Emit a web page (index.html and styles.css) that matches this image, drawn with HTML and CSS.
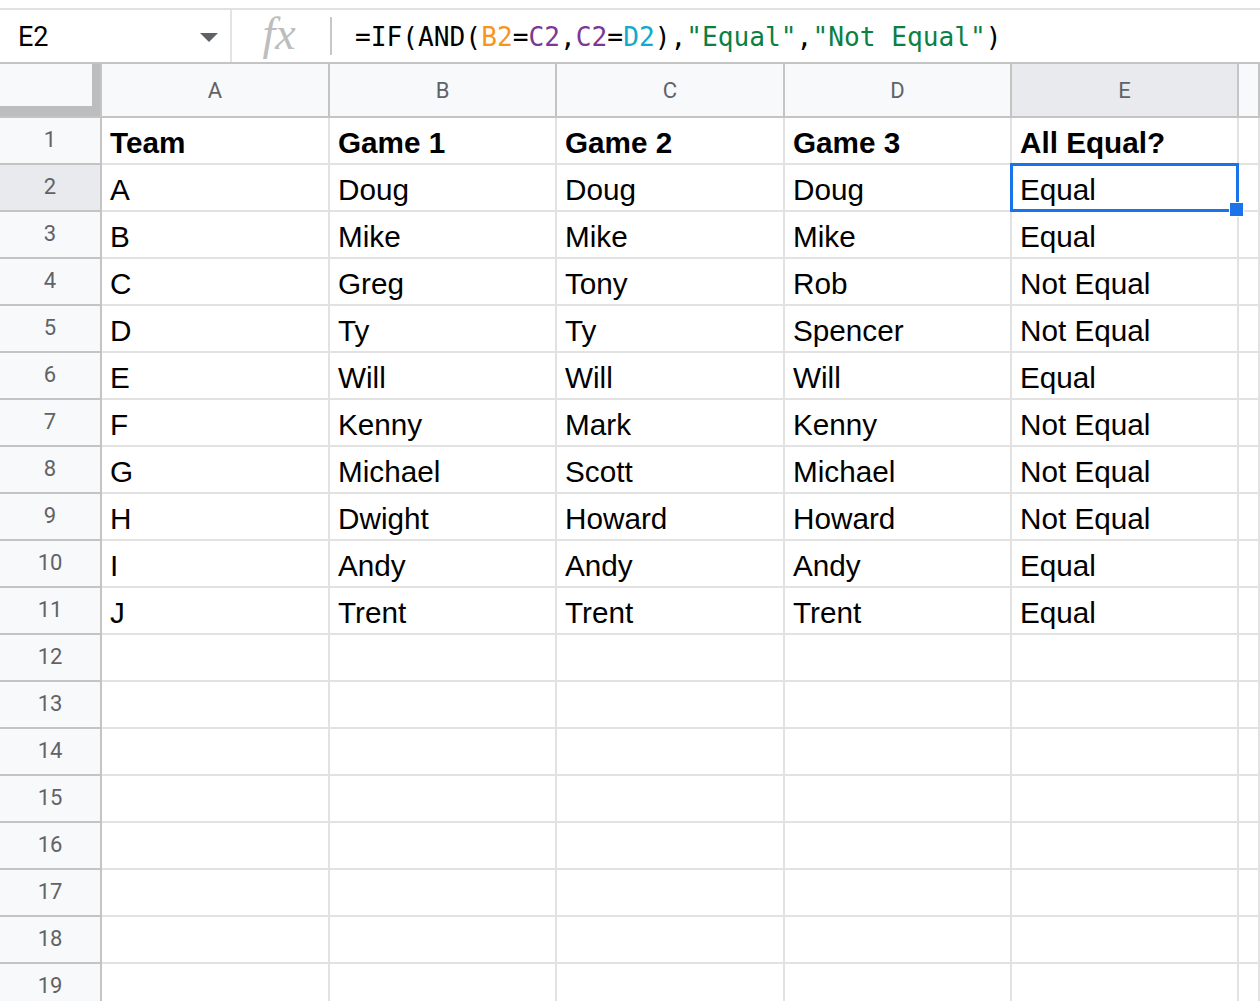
FILE: index.html
```html
<!DOCTYPE html>
<html lang="en">
<head>
  <meta charset="UTF-8" />
  <title>All Equal? - Sheet</title>
  <link rel="stylesheet" href="styles.css">
</head>
<body>

<div id="formula-bar">
  <div class="name-box">
    <span class="name-ref">E2</span>
    <span class="name-caret"></span>
  </div>
  <div class="fx-box"><span class="fx">fx</span></div>
  <div class="formula"><span>=IF(AND(</span><span class="ref-b">B2</span><span>=</span><span class="ref-c">C2</span><span>,</span><span class="ref-c">C2</span><span>=</span><span class="ref-d">D2</span><span>),</span><span class="str">"Equal"</span><span>,</span><span class="str">"Not Equal"</span><span>)</span></div>
</div>

<div id="sheet"></div>

<script>
  const sheet = document.getElementById('sheet');
  const columns = ['A', 'B', 'C', 'D', 'E'];
  const rows = [
    ['Team', 'Game 1', 'Game 2', 'Game 3', 'All Equal?'],
    ['A', 'Doug', 'Doug', 'Doug', 'Equal'],
    ['B', 'Mike', 'Mike', 'Mike', 'Equal'],
    ['C', 'Greg', 'Tony', 'Rob', 'Not Equal'],
    ['D', 'Ty', 'Ty', 'Spencer', 'Not Equal'],
    ['E', 'Will', 'Will', 'Will', 'Equal'],
    ['F', 'Kenny', 'Mark', 'Kenny', 'Not Equal'],
    ['G', 'Michael', 'Scott', 'Michael', 'Not Equal'],
    ['H', 'Dwight', 'Howard', 'Howard', 'Not Equal'],
    ['I', 'Andy', 'Andy', 'Andy', 'Equal'],
    ['J', 'Trent', 'Trent', 'Trent', 'Equal']
  ];
  const totalRows = 19;

  function addCell(cls, text) {
    const cell = document.createElement('div');
    cell.className = cls;
    if (text) cell.textContent = text;
    sheet.appendChild(cell);
    return cell;
  }

  // column headers
  addCell('corner');
  columns.forEach(c => addCell(c === 'E' ? 'col-head active' : 'col-head', c));
  addCell('col-head');

  for (let r = 1; r <= totalRows; r++) {
    addCell(r === 2 ? 'row-head active' : 'row-head', String(r));
    const data = rows[r - 1] || [];
    for (let c = 0; c < 5; c++) {
      const cell = addCell(r === 1 ? 'cell bold' : 'cell', data[c] || '');
      if (r === 2 && c === 4) {
        cell.classList.add('selected');
        const handle = document.createElement('span');
        handle.className = 'fill-handle';
        cell.appendChild(handle);
      }
    }
    addCell('cell');
  }
</script>

</body>
</html>
```

FILE: styles.css
```css
* { box-sizing: border-box; margin: 0; padding: 0; }
body {
  background: #fff;
  font-family: 'Liberation Sans', Arial, sans-serif;
  overflow: hidden;
  padding-top: 8px;
}

#formula-bar {
  display: flex;
  align-items: center;
  height: 56px;
  border-top: 2px solid #e1e1e1;
  border-bottom: 2px solid #c4c4c4;
}
.name-box {
  display: flex;
  align-items: center;
  width: 232px;
  height: 100%;
  padding: 0 12px 0 18px;
  border-right: 2px solid #e3e3e3;
}
.name-ref {
  flex: 1;
  font-family: Roboto, sans-serif;
  font-size: 27px;
  color: #000;
  margin-top: 2px;
}
.name-caret {
  width: 0;
  height: 0;
  border-left: 9px solid transparent;
  border-right: 9px solid transparent;
  border-top: 9px solid #5f6368;
  margin-top: 2px;
}
.fx-box {
  display: flex;
  align-items: center;
  justify-content: center;
  width: 100px;
  height: 38px;
  border-right: 2px solid #c7c7c7;
}
.fx {
  font-family: 'Liberation Serif', 'DejaVu Serif', serif;
  font-style: italic;
  font-size: 46px;
  color: #bdbdbd;
  margin-top: -6px;
  margin-left: -4px;
}
.formula {
  padding-left: 23px;
  font-family: 'DejaVu Sans Mono', 'Liberation Mono', monospace;
  font-size: 26.2px;
  color: #000;
  white-space: pre;
  margin-top: 2px;
}
.ref-b { color: #f6961e; }
.ref-c { color: #7e3794; }
.ref-d { color: #11a9cc; }
.str { color: #0b8043; }

#sheet {
  display: grid;
  grid-template-columns: 102px 228px 227px 228px 227px 227px 1fr;
  grid-template-rows: 54px;
  grid-auto-rows: 47px;
}
.corner {
  position: relative;
  background: #f8f9fa;
  border-bottom: 2px solid #c4c4c4;
  border-right: 2px solid #c4c4c4;
}
.corner::before {
  content: '';
  position: absolute;
  right: 0;
  top: 0;
  width: 8px;
  height: 52px;
  background: #bdbdbd;
}
.corner::after {
  content: '';
  position: absolute;
  left: 0;
  bottom: 0;
  width: 100px;
  height: 10px;
  background: #bdbdbd;
}
.col-head {
  display: flex;
  align-items: center;
  justify-content: center;
  background: #f8f9fa;
  border-right: 2px solid #c4c4c4;
  border-bottom: 2px solid #c4c4c4;
  font-family: Roboto, sans-serif;
  font-size: 22px;
  color: #5f6368;
}
.row-head {
  display: flex;
  align-items: center;
  justify-content: center;
  background: #f8f9fa;
  border-right: 2px solid #c4c4c4;
  border-bottom: 2px solid #c4c4c4;
  font-family: Roboto, sans-serif;
  font-size: 22px;
  color: #5f6368;
  padding-bottom: 2px;
}
.col-head.active, .row-head.active {
  background: #e8eaed;
}
.cell {
  position: relative;
  display: flex;
  align-items: flex-end;
  padding: 0 8px 2px 8px;
  border-right: 2px solid #e2e2e2;
  border-bottom: 2px solid #e2e2e2;
  font-size: 29.7px;
  line-height: 36px;
  color: #000;
  white-space: nowrap;
}
.cell.bold {
  font-weight: bold;
}
.cell.selected::before {
  content: '';
  position: absolute;
  left: -2px;
  top: -2px;
  right: -2px;
  bottom: -2px;
  border: 3px solid #1a73e8;
  pointer-events: none;
}
.fill-handle {
  position: absolute;
  right: -7px;
  bottom: -7px;
  width: 15px;
  height: 15px;
  background: #1a73e8;
  border: 1px solid #fff;
  z-index: 2;
}
```
